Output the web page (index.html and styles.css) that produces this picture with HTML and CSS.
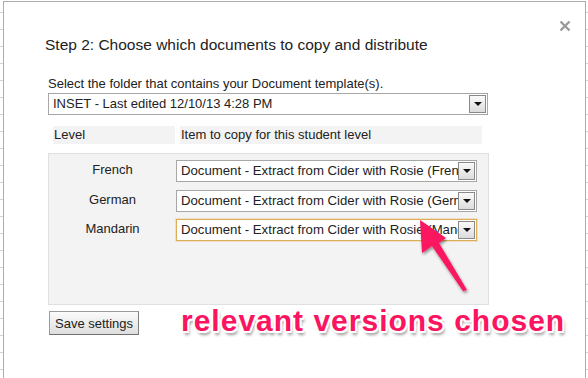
FILE: index.html
```html
<!DOCTYPE html>
<html lang="en">
<head>
    <meta charset="UTF-8">
    <title>Choose documents</title>
    <link rel="stylesheet" href="styles.css">
</head>
<body>
    <div class="dialog">
        <svg class="close" width="12" height="12" viewBox="0 0 12 12">
            <path d="M1.5 1.5 L10.5 10.5 M10.5 1.5 L1.5 10.5" stroke="#9a9a9a" stroke-width="2.4" fill="none"/>
        </svg>
        <h1 class="title">Step 2: Choose which documents to copy and distribute</h1>
        <div class="folder-label">Select the folder that contains your Document template(s).</div>
        <div class="dropdown wide">
            <span class="dropdown-text">INSET - Last edited 12/10/13 4:28 PM</span>
            <span class="dropdown-btn"><i class="caret"></i></span>
        </div>

        <div class="head-row">
            <div class="head-cell level-head">Level</div>
            <div class="head-cell item-head">Item to copy for this student level</div>
        </div>

        <div class="panel">
            <div class="level-row">
                <div class="level-name">French</div>
                <div class="dropdown">
                    <span class="dropdown-text">Document - Extract from Cider with Rosie (French)</span>
                    <span class="dropdown-btn"><i class="caret"></i></span>
                </div>
            </div>
            <div class="level-row">
                <div class="level-name">German</div>
                <div class="dropdown">
                    <span class="dropdown-text">Document - Extract from Cider with Rosie (German)</span>
                    <span class="dropdown-btn"><i class="caret"></i></span>
                </div>
            </div>
            <div class="level-row">
                <div class="level-name">Mandarin</div>
                <div class="dropdown focused">
                    <span class="dropdown-text">Document - Extract from Cider with Rosie (Mandarin)</span>
                    <span class="dropdown-btn"><i class="caret"></i></span>
                </div>
            </div>
        </div>

        <button class="save-btn">Save settings</button>
    </div>

    <svg class="arrow" width="588" height="378" viewBox="0 0 588 378">
        <defs>
            <filter id="shadow" x="-20%" y="-20%" width="140%" height="140%">
                <feGaussianBlur in="SourceAlpha" stdDeviation="1.5"/>
                <feOffset dx="1" dy="2"/>
                <feComponentTransfer><feFuncA type="linear" slope="0.45"/></feComponentTransfer>
                <feMerge><feMergeNode/><feMergeNode in="SourceGraphic"/></feMerge>
            </filter>
        </defs>
        <polygon points="420,220 446,238 439,243 467,290 463,291 432,246 422,253" fill="#fb1460" filter="url(#shadow)"/>
    </svg>

    <div class="note">relevant versions chosen</div>
</body>
</html>
```

FILE: styles.css
```css
body {
    margin: 0;
    padding: 0;
    height: 378px;
    overflow: hidden;
    font-family: Arial, "Liberation Sans", sans-serif;
    color: #222;
    background-color: #fff;
    background-image: repeating-linear-gradient(to bottom, transparent 0, transparent 12px, #d4d4d4 12px, #d4d4d4 13px, transparent 13px, transparent 17px);
}

.dialog {
    position: relative;
    box-sizing: border-box;
    width: 583px;
    height: 377px;
    margin: 1px 0 0 3px;
    padding: 33px 0 0 44px;
    background: #fff;
    border: 1px solid #acacac;
    border-bottom: none;
}

.close {
    position: absolute;
    top: 18px;
    left: 555px;
}

.title {
    margin: 0 0 0 -3px;
    font-size: 15.5px;
    font-weight: normal;
    line-height: 19px;
    color: #222;
}

.folder-label {
    margin-top: 22px;
    font-size: 13px;
    line-height: 15px;
}

.dropdown {
    display: flex;
    box-sizing: border-box;
    height: 22px;
    width: 301px;
    border: 1px solid #a7a7a7;
    background: #fff;
    font-size: 13.2px;
    line-height: 20px;
}

.dropdown.wide {
    width: 440px;
    margin-top: 2px;
    font-size: 13px;
}

.dropdown.focused {
    border-color: #dcae57;
    box-shadow: 0 0 0 1px rgba(230, 190, 110, 0.35);
}

.dropdown-text {
    flex: 1;
    padding-left: 4px;
    overflow: hidden;
    white-space: nowrap;
}

.dropdown-btn {
    display: flex;
    align-items: center;
    justify-content: center;
    box-sizing: border-box;
    width: 17px;
    height: 18px;
    margin: 1px 1px 0 0;
    border: 1px solid #8a8a8a;
    background: linear-gradient(to bottom, #fafafa, #dcdcdc);
}

.caret {
    width: 0;
    height: 0;
    border-left: 4px solid transparent;
    border-right: 4px solid transparent;
    border-top: 4px solid #111;
}

.head-row {
    display: flex;
    gap: 5px;
    margin: 11px 0 0 5px;
}

.head-cell {
    height: 18px;
    line-height: 18px;
    font-size: 13px;
    padding-left: 1px;
    box-sizing: border-box;
    background: #f3f3f3;
}

.level-head {
    width: 122px;
}

.item-head {
    width: 302px;
}

.panel {
    box-sizing: border-box;
    width: 441px;
    height: 152px;
    margin-top: 9px;
    padding-top: 6px;
    background: #f3f3f3;
    border: 1px solid #e0e0e0;
}

.level-row {
    display: flex;
    align-items: center;
    margin-bottom: 7.5px;
}

.level-name {
    width: 127px;
    text-align: center;
    font-size: 13px;
    line-height: 18px;
    margin-top: -2px;
}

.save-btn {
    display: block;
    box-sizing: border-box;
    width: 90px;
    height: 24px;
    margin: 6px 0 0 1px;
    padding: 0 0 0 5px;
    text-align: left;
    font-family: Arial, "Liberation Sans", sans-serif;
    font-size: 13px;
    color: #222;
    border: 1px solid #9b9b9b;
    border-bottom-color: #6f6f6f;
    border-right-color: #7f7f7f;
    background: linear-gradient(to bottom, #fbfbfb, #dedede);
}

.arrow {
    position: absolute;
    top: 0;
    left: 0;
}

.note {
    position: absolute;
    left: 181px;
    top: 305px;
    font-size: 30px;
    font-weight: bold;
    letter-spacing: 1px;
    line-height: 32px;
    color: #fb1460;
    white-space: nowrap;
    text-shadow:
        2px 0 0 #fff, -2px 0 0 #fff, 0 2px 0 #fff, 0 -2px 0 #fff,
        1.5px 1.5px 0 #fff, -1.5px 1.5px 0 #fff, 1.5px -1.5px 0 #fff, -1.5px -1.5px 0 #fff,
        2px 4px 3px rgba(0, 0, 0, 0.4);
}
```
